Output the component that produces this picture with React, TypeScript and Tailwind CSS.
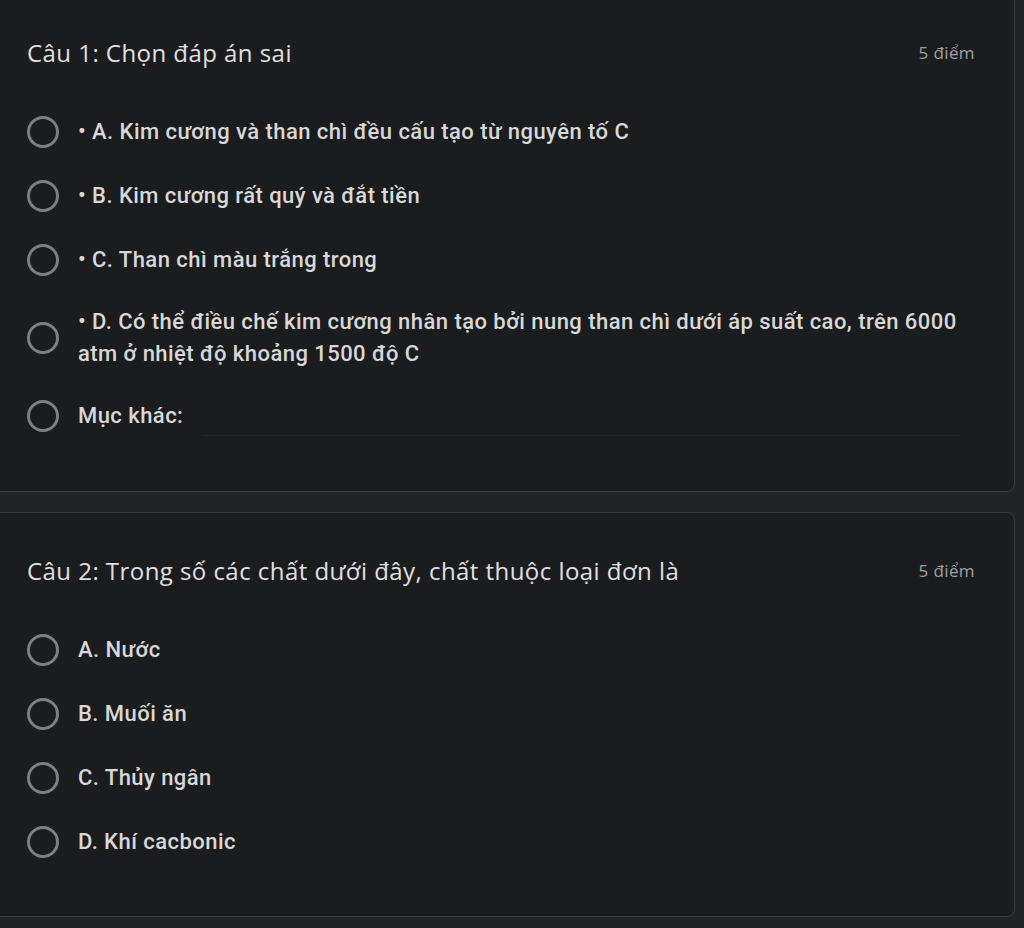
import React from "react";

const Radio = () => (
  <div className="w-[32px] h-[32px] shrink-0 rounded-full border-[3px] border-[#7e7f80]" />
);

function Option({ text, two }: { text: string; two?: boolean }) {
  return (
    <div className={`flex items-center gap-[19px] ${two ? "-my-[2px]" : ""}`}>
      <Radio />
      <div className="text-[22px] leading-[32px] font-medium tracking-[0.45px] text-[#d8d8d8]">{text}</div>
    </div>
  );
}

function Card({
  title,
  children,
  className,
}: {
  title: string;
  children: React.ReactNode;
  className?: string;
}) {
  return (
    <div
      className={`-ml-[12px] w-[1027px] rounded-[8px] border border-[#3a3b3e] bg-[#1b1c1e] pl-[38px] pr-[39px] pt-[44px] ${className ?? ""}`}
    >
      <div className="flex items-center justify-between h-[28px]">
        <div
          className="text-[24px] leading-[28px] font-medium tracking-[0.45px] text-[#e0e0e0]"
          style={{ fontFamily: "'Open Sans', sans-serif" }}
        >
          {title}
        </div>
        <div
          className="text-[17px] tracking-[0.4px] text-[#a0a1a3]"
          style={{ fontFamily: "'Open Sans', sans-serif" }}
        >
          5 điểm
        </div>
      </div>
      <div className="mt-[49px] flex flex-col gap-[32px]">{children}</div>
    </div>
  );
}

export default function App() {
  return (
    <div
      className="w-[1024px] h-[928px] overflow-hidden bg-[#222326]"
      style={{ fontFamily: "Roboto, 'Noto Sans', sans-serif" }}
    >
      <Card title="Câu 1: Chọn đáp án sai" className="-mt-[6px] pb-[59px]">
        <Option text="• A. Kim cương và than chì đều cấu tạo từ nguyên tố C" />
        <Option text="• B. Kim cương rất quý và đắt tiền" />
        <Option text="• C. Than chì màu trắng trong" />
        <Option
          two
          text="• D. Có thể điều chế kim cương nhân tạo bởi nung than chì dưới áp suất cao, trên 6000 atm ở nhiệt độ khoảng 1500 độ C"
        />
        <div className="flex items-center gap-[19px]">
          <Radio />
          <div className="text-[22px] leading-[32px] font-medium tracking-[0.45px] text-[#d8d8d8]">Mục khác:</div>
          <div className="flex-1 self-end mr-[16px] border-b border-[#242528] h-[1px] -mb-[4px]" />
        </div>
      </Card>
      <div className="h-[20px]" />
      <Card title="Câu 2: Trong số các chất dưới đây, chất thuộc loại đơn là" className="pb-[58px]">
        <Option text="A. Nước" />
        <Option text="B. Muối ăn" />
        <Option text="C. Thủy ngân" />
        <Option text="D. Khí cacbonic" />
      </Card>
    </div>
  );
}
